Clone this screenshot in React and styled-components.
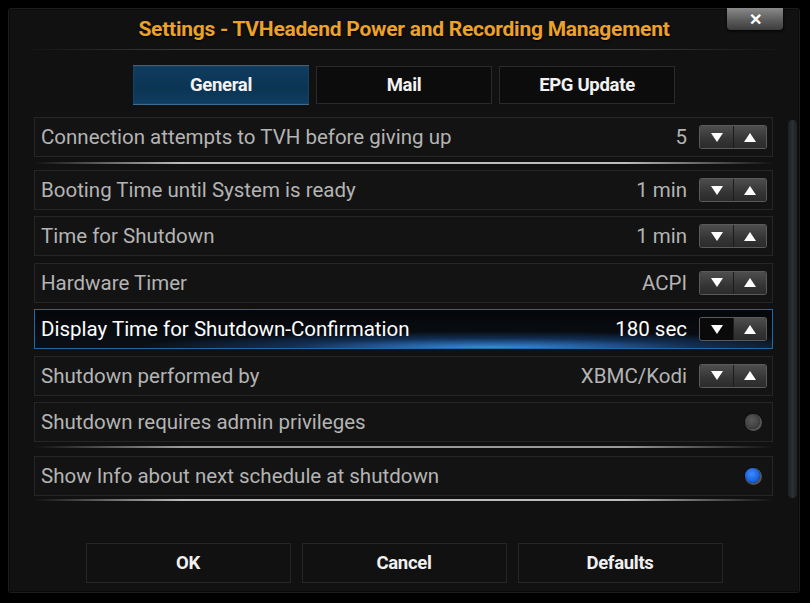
import React from "react";
import styled, { createGlobalStyle } from "styled-components";

const GlobalStyle = createGlobalStyle`
  html, body {
    margin: 0;
    padding: 0;
    background: #000;
  }
  body {
    font-family: Roboto, "Liberation Sans", sans-serif;
  }
`;

const Screen = styled.div`
  width: 810px;
  height: 603px;
  padding: 8px 10px 10px 8px;
  box-sizing: border-box;
  background: #000;
`;

const Dialog = styled.div`
  position: relative;
  height: 100%;
  box-sizing: border-box;
  background: #111;
  border: 1px solid #1d1d1d;
  border-radius: 3px;
  box-shadow: inset 0 0 0 1px #0a0a0a;
  display: flex;
  flex-direction: column;
`;

const Header = styled.div`
  height: 40px;
  display: flex;
  align-items: center;
  justify-content: center;
`;

const Title = styled.h1`
  margin: 0;
  font-size: 21px;
  font-weight: 700;
  letter-spacing: -0.25px;
  color: #eba22a;
  text-shadow: 0 1px 2px #000;
`;

const CloseButton = styled.div`
  position: absolute;
  top: -1px;
  right: 16px;
  width: 56px;
  height: 22px;
  border-radius: 0 0 4px 4px;
  background: linear-gradient(#8a8a8a, #5c5c5c 55%, #3c3c3c);
  box-shadow: 0 1px 3px #000;
  color: #fff;
  font-size: 16px;
  font-weight: 700;
  display: flex;
  align-items: center;
  justify-content: center;
`;

const Rule = styled.div`
  height: ${p => p.$h || 2}px;
  flex-shrink: 0;
  margin: ${p => p.$m || "0"};
  background: linear-gradient(
    90deg,
    transparent,
    ${p => p.$c || "#777"} 20%,
    ${p => p.$c || "#777"} 80%,
    transparent
  );
`;

const Tabs = styled.div`
  display: flex;
  justify-content: center;
  gap: 7px;
  margin-top: 16px;
`;

const Tab = styled.div`
  width: 176px;
  height: 38px;
  box-sizing: border-box;
  display: flex;
  align-items: center;
  justify-content: center;
  font-size: 18.5px;
  font-weight: 700;
  letter-spacing: -0.3px;
  color: #f2f2f2;
  border: 1px solid ${p => (p.$active ? "#124468" : "#2a2a2a")};
  background: ${p =>
    p.$active ? "linear-gradient(#0f3c5e, #0c3453 60%, #0f3d60)" : "#0c0c0c"};
  box-shadow: ${p => (p.$active ? "0 -1px 0 #4b5c6a, 0 1px 0 #3e6c90" : "none")};
`;

const Body = styled.div`
  display: flex;
  margin-top: 13px;
  padding-left: 25px;
  padding-right: 2px;
`;

const List = styled.div`
  width: 740px;
  display: flex;
  flex-direction: column;
`;

const Row = styled.div`
  height: 40px;
  flex-shrink: 0;
  box-sizing: border-box;
  display: flex;
  align-items: center;
  padding: 0 6px;
  margin-bottom: ${p => p.$mb ?? 6.4}px;
  border: 1px solid ${p => (p.$focus ? "#1e6aa6" : "#262626")};
  background: ${p =>
    p.$focus
      ? "radial-gradient(ellipse 55% 50% at 62% 100%, rgba(60,150,240,0.95), rgba(25,80,150,0.5) 50%, transparent 88%), linear-gradient(#050608, #0a1018)"
      : "#131313"};
  font-size: 20.5px;
  color: ${p => (p.$focus ? "#fff" : "#b4b4b4")};
`;

const Label = styled.span`
  flex: 1;
`;

const Value = styled.span`
  margin-right: 13px;
`;

const Spinner = styled.div`
  display: flex;
  height: 22px;
  border-radius: 2px;
  overflow: hidden;
  box-shadow: 0 0 0 1px #5a5a5a;
`;

const SpinButton = styled.div`
  width: ${p => (p.$sep ? 32 : 33)}px;
  height: 22px;
  display: flex;
  align-items: center;
  justify-content: center;
  background: ${p =>
    p.$dark ? "#0a0a0a" : "linear-gradient(#4e4e4e, #353535 60%, #2b2b2b)"};
  border-left: ${p => (p.$sep ? "1px solid #1c1c1c" : "none")};
`;

const Radio = styled.div`
  width: 15px;
  height: 15px;
  margin-right: 6px;
  border-radius: 50%;
  background: ${p =>
    p.$on
      ? "radial-gradient(circle at 45% 40%, #3d8cff, #1359d8 70%)"
      : "radial-gradient(circle at 45% 40%, #5a5a5a, #3e3e3e 70%)"};
  box-shadow: 1px 1px 0 1px #555, 0 0 2px #000;
`;

const Scrollbar = styled.div`
  width: 9px;
  height: 378px;
  margin-left: 15px;
  margin-top: 3px;
  border-radius: 5px;
  background: linear-gradient(90deg, #1c2126, #2a3036, #1c2126);
`;

const Footer = styled.div`
  display: flex;
  justify-content: center;
  gap: 11px;
  margin-top: 42px;
`;

const Button = styled.div`
  width: 205px;
  height: 40px;
  box-sizing: border-box;
  display: flex;
  align-items: center;
  justify-content: center;
  border: 1px solid #262626;
  background: #111;
  color: #f0f0f0;
  font-size: 18.5px;
  font-weight: 700;
  letter-spacing: -0.3px;
`;

const Tri = ({ up }) => (
  <svg width="12" height="9" viewBox="0 0 12 9">
    <path d={up ? "M6 0 L12 9 L0 9 Z" : "M0 0 L12 0 L6 9 Z"} fill="#fff" />
  </svg>
);

const rows = [
  { label: "Booting Time until System is ready", value: "1 min" },
  { label: "Time for Shutdown", value: "1 min" },
  { label: "Hardware Timer", value: "ACPI" },
  { label: "Display Time for Shutdown-Confirmation", value: "180 sec", focus: true },
  { label: "Shutdown performed by", value: "XBMC/Kodi" },
];

const SpinRow = ({ label, value, focus, mb }) => (
  <Row $focus={focus} $mb={mb}>
    <Label>{label}</Label>
    <Value>{value}</Value>
    <Spinner>
      <SpinButton $dark={focus}>
        <Tri />
      </SpinButton>
      <SpinButton $sep>
        <Tri up />
      </SpinButton>
    </Spinner>
  </Row>
);

export default function App() {
  return (
    <Screen>
      <GlobalStyle />
      <Dialog>
        <Header>
          <Title>Settings - TVHeadend Power and Recording Management</Title>
        </Header>
        <Rule $h={1} $c="#3a3a3a" $m="0 12px" />
        <CloseButton>✕</CloseButton>
        <Tabs>
          <Tab $active>General</Tab>
          <Tab>Mail</Tab>
          <Tab>EPG Update</Tab>
        </Tabs>
        <Body>
          <List>
            <SpinRow label="Connection attempts to TVH before giving up" value="5" mb={5} />
            <Rule $c="#bdbdbd" $m="0 0 6px" />
            {rows.map(r => (
              <SpinRow key={r.label} {...r} />
            ))}
            <Row $mb={4}>
              <Label>Shutdown requires admin privileges</Label>
              <Radio />
            </Row>
            <Rule $c="#9a9a9a" $m="0 0 8px" />
            <Row $mb={3}>
              <Label>Show Info about next schedule at shutdown</Label>
              <Radio $on />
            </Row>
            <Rule $c="#bdbdbd" />
          </List>
          <Scrollbar />
        </Body>
        <Footer>
          <Button>OK</Button>
          <Button>Cancel</Button>
          <Button>Defaults</Button>
        </Footer>
      </Dialog>
    </Screen>
  );
}
